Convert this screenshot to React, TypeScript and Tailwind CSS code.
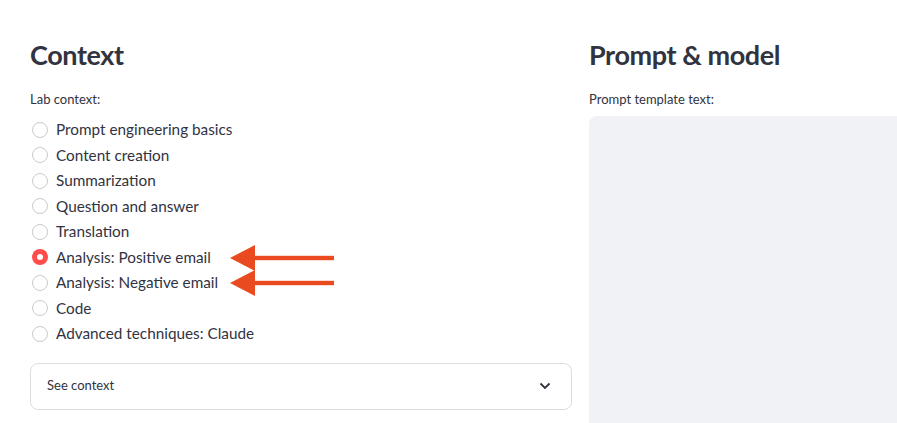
import React from "react";

const items = [
  "Prompt engineering basics",
  "Content creation",
  "Summarization",
  "Question and answer",
  "Translation",
  "Analysis: Positive email",
  "Analysis: Negative email",
  "Code",
  "Advanced techniques: Claude",
];

function Arrow({ top }: { top: number }) {
  return (
    <svg
      className="absolute"
      style={{ left: 229, top }}
      width="106"
      height="26"
      viewBox="0 0 106 26"
    >
      <polygon points="1,13 26,0 26,26" fill="#ea4a1f" />
      <rect x="25" y="10.8" width="80" height="4.4" fill="#ea4a1f" />
    </svg>
  );
}

export default function App() {
  return (
    <div
      className="relative w-[897px] h-[423px] overflow-hidden bg-white text-[#31333f]"
      style={{ fontFamily: "Lato, 'Noto Sans', sans-serif" }}
    >
      <div className="flex gap-[17px] pl-[30px] pt-[36px]">
        <div className="w-[542px] shrink-0 flex flex-col">
          <h2 className="text-[27px] font-bold leading-[38px] tracking-[-0.4px]">Context</h2>
          <div className="mt-[16px] text-[13px] leading-[18px]">Lab context:</div>
          <div className="mt-[9px] flex flex-col">
            {items.map((t, i) => (
              <div key={t} className="flex items-center h-[25.5px]">
                {i === 5 ? (
                  <span className="ml-[2px] w-[16px] h-[16px] rounded-full bg-[#ff4b4b] flex items-center justify-center">
                    <span className="w-[6px] h-[6px] rounded-full bg-white" />
                  </span>
                ) : (
                  <span className="ml-[2px] w-[16px] h-[16px] rounded-full border border-[#c9cacf] bg-white" />
                )}
                <span className="ml-[8px] text-[15.3px]">{t}</span>
              </div>
            ))}
          </div>
          <div className="mt-[16px] h-[47px] rounded-[8px] border border-[#dcdde1] flex items-center justify-between pl-[16px] pr-[20px]">
            <span className="text-[13px]">See context</span>
            <svg width="12" height="8" viewBox="0 0 12 8">
              <path d="M1.5 1.5 L6 6 L10.5 1.5" fill="none" stroke="#31333f" strokeWidth="1.8" />
            </svg>
          </div>
        </div>
        <div className="flex-1 flex flex-col">
          <h2 className="text-[27px] font-bold leading-[38px] tracking-[-0.4px]">Prompt &amp; model</h2>
          <div className="mt-[16px] text-[13px] leading-[18px]">Prompt template text:</div>
          <div className="mt-[8px] h-[400px] rounded-tl-[8px] bg-[#f0f2f6]" />
        </div>
      </div>
      <Arrow top={244.5} />
      <Arrow top={270} />
    </div>
  );
}
